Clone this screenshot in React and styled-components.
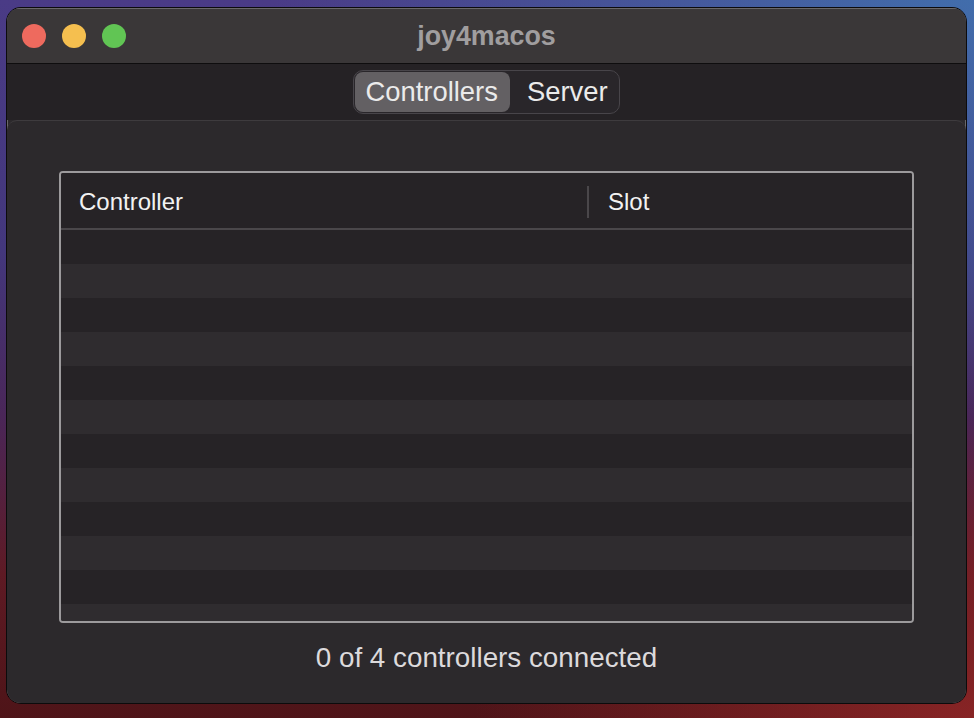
import styled, { createGlobalStyle } from "styled-components"

const GlobalStyle = createGlobalStyle`
  html, body {
    margin: 0;
    height: 100%;
  }
  body {
    width: 974px;
    height: 718px;
    overflow: hidden;
    font-family: "Liberation Sans", Arial, sans-serif;
    background:
      radial-gradient(ellipse 700px 420px at 100% 0%, rgba(64, 118, 178, 0.85) 0%, rgba(64, 118, 178, 0) 100%),
      radial-gradient(ellipse 500px 300px at 100% 100%, rgba(150, 40, 40, 0.8) 0%, rgba(150, 40, 40, 0) 100%),
      linear-gradient(180deg, #4a3b86 0%, #43377c 35%, #4a2658 58%, #5e1a24 80%, #4e1418 100%);
  }
`

const Desktop = styled.div`
  padding: 8px 8px 15px 7px;
`

const Window = styled.div`
  height: 695px;
  display: flex;
  flex-direction: column;
  background: #2c292c;
  border-radius: 14px;
  overflow: hidden;
  box-shadow: 0 0 0 1px #0c0b0c, inset 0 0 0 1px #6a686a;
`

const TitleBar = styled.div`
  position: relative;
  height: 56px;
  flex: none;
  display: flex;
  align-items: center;
  justify-content: center;
  background: #3a3738;
  border-top: 1px solid #6a686a;
  border-bottom: 1px solid #0e0d0e;
  box-sizing: border-box;
`

const Lights = styled.div`
  position: absolute;
  left: 15px;
  top: 15px;
  display: flex;
  gap: 16px;
`

const Light = styled.span`
  width: 24px;
  height: 24px;
  border-radius: 50%;
  background: ${({ color }) => color};
`

const Title = styled.div`
  font-weight: bold;
  font-size: 26.8px;
  color: #a09e9f;
  margin-top: 1px;
`

const Toolbar = styled.div`
  height: 56px;
  flex: none;
  display: flex;
  align-items: center;
  justify-content: center;
  background: #252225;
`

const Segmented = styled.div`
  display: flex;
  align-items: center;
  height: 44px;
  box-sizing: border-box;
  padding: 1px;
  border: 1px solid #48454a;
  border-radius: 10px;
  background: #29262a;
`

const Segment = styled.div`
  height: 40px;
  display: flex;
  align-items: center;
  padding: 0 ${({ active }) => (active ? "12px" : "10px")} 0 ${({ active }) => (active ? "10px" : "17px")};
  border-radius: 8px;
  font-size: 27.4px;
  color: #ebebeb;
  background: ${({ active }) => (active ? "#636063" : "transparent")};
`

const Content = styled.div`
  flex: 1;
  display: flex;
  flex-direction: column;
  align-items: center;
  background: #2c292c;
  border-top: 1px solid #3e3b3e;
  border-radius: 10px 10px 0 0;
  padding-top: 50px;
`

const Table = styled.div`
  width: 855px;
  height: 452px;
  box-sizing: border-box;
  border: 2px solid #9c9a9c;
  border-radius: 4px;
  background: #2e2b2e;
  overflow: hidden;
  display: flex;
  flex-direction: column;
`

const Header = styled.div`
  height: 57px;
  flex: none;
  display: flex;
  align-items: center;
  padding-top: 3px;
  background: #262326;
  border-bottom: 2px solid #4a474a;
  box-sizing: border-box;
`

const HeaderCell = styled.div`
  width: ${({ w }) => w};
  height: 32px;
  display: flex;
  align-items: center;
  box-sizing: border-box;
  padding-left: ${({ pad }) => pad};
  font-size: 24px;
  color: #f2f2f2;
  border-left: ${({ divider }) => (divider ? "2px solid #4a474a" : "none")};
`

const Row = styled.div`
  height: 34px;
  flex: none;
  background: ${({ odd }) => (odd ? "#2f2c2f" : "#262326")};
`

const Footer = styled.div`
  margin-top: 19px;
  font-size: 27.8px;
  color: #dcdadc;
`

const rows = Array.from({ length: 12 })

export default function App() {
  return (
    <>
      <GlobalStyle />
      <Desktop>
        <Window>
          <TitleBar>
            <Lights>
              <Light color="#ee6a5e" />
              <Light color="#f5bf4f" />
              <Light color="#61c554" />
            </Lights>
            <Title>joy4macos</Title>
          </TitleBar>
          <Toolbar>
            <Segmented>
              <Segment active>Controllers</Segment>
              <Segment>Server</Segment>
            </Segmented>
          </Toolbar>
          <Content>
            <Table>
              <Header>
                <HeaderCell w="526px" pad="18px">Controller</HeaderCell>
                <HeaderCell w="324px" pad="19px" divider>Slot</HeaderCell>
              </Header>
              {rows.map((_, i) => (
                <Row key={i} odd={i % 2 === 1} />
              ))}
            </Table>
            <Footer>0 of 4 controllers connected</Footer>
          </Content>
        </Window>
      </Desktop>
    </>
  )
}
